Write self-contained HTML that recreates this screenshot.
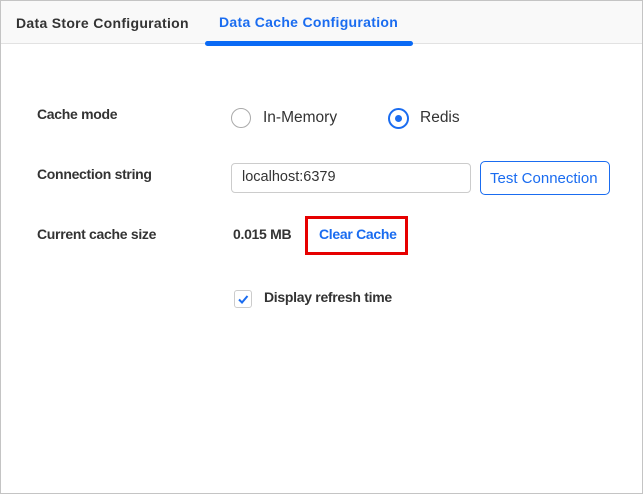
<!DOCTYPE html>
<html><head><style>
body{margin:0;width:643px;height:494px;overflow:hidden;background:#fff;font-family:"Liberation Sans",Arial,sans-serif;}
#f{position:absolute;left:0;top:0;width:641px;height:492px;border:1px solid #c4c4c4;}
.a{position:absolute;white-space:nowrap;}
.lbl{font-size:14px;font-weight:bold;color:#333;letter-spacing:-0.3px}
</style></head><body>
<div id="f">
<div class="a" style="left:0;top:0;width:641px;height:42px;background:#f9f9f9;border-bottom:1px solid #e2e2e2"></div>
<div class="a" style="left:15px;top:14px;font-size:14px;font-weight:bold;color:#333;letter-spacing:0.3px">Data Store Configuration</div>
<div class="a" style="left:218px;top:13px;font-size:14px;font-weight:bold;color:#1a6cf0;letter-spacing:0.3px">Data Cache Configuration</div>
<div class="a" style="left:204px;top:40px;width:208px;height:5px;background:#0a6af5;border-radius:3px"></div>

<div class="a lbl" style="left:36px;top:105px">Cache mode</div>
<div class="a" style="left:230px;top:107px;width:20px;height:20px;border:1.5px solid #aaa;border-radius:50%;box-sizing:border-box"></div>
<div class="a" style="left:262px;top:108px;font-size:15.5px;color:#333">In-Memory</div>
<div class="a" style="left:387px;top:107px;width:21px;height:21px;border:2px solid #1a6cf0;border-radius:50%;box-sizing:border-box"></div>
<div class="a" style="left:394px;top:114px;width:7px;height:7px;background:#1a6cf0;border-radius:50%"></div>
<div class="a" style="left:419px;top:108px;font-size:15.5px;color:#333">Redis</div>

<div class="a lbl" style="left:36px;top:165px">Connection string</div>
<div class="a" style="left:230px;top:162px;width:240px;height:30px;border:1px solid #ccc;border-radius:4px;box-sizing:border-box"></div>
<div class="a" style="left:241px;top:168px;font-size:14.5px;color:#333">localhost:6379</div>
<div class="a" style="left:479px;top:160px;width:130px;height:34px;border:1px solid #1a6cf0;border-radius:5px;box-sizing:border-box"></div>
<div class="a" style="left:489px;top:169px;font-size:15px;color:#1a6cf0">Test Connection</div>

<div class="a lbl" style="left:36px;top:225px">Current cache size</div>
<div class="a lbl" style="left:232px;top:225px">0.015 MB</div>
<div class="a" style="left:304px;top:215px;width:103px;height:39px;border:3px solid #e60000;box-sizing:border-box"></div>
<div class="a lbl" style="left:318px;top:225px;color:#1a6cf0">Clear Cache</div>

<div class="a" style="left:233px;top:289px;width:18px;height:18px;border:1px solid #ccc;border-radius:3px;box-sizing:border-box"></div>
<svg class="a" style="left:233px;top:289px" width="18" height="18"><path d="M5 9.5 L8 12.5 L13.5 6" stroke="#1a6cf0" stroke-width="2" fill="none"/></svg>
<div class="a lbl" style="left:263px;top:288px">Display refresh time</div>
</div>
</body></html>
